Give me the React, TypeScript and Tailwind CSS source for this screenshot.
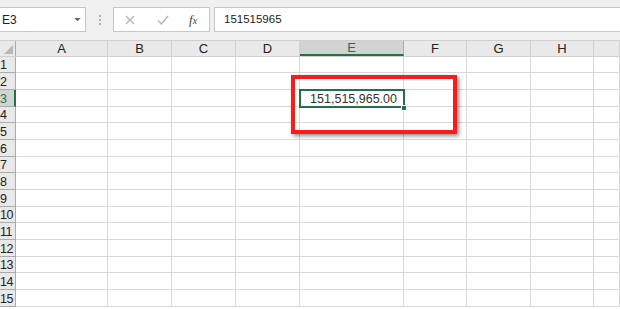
import React from "react";

const colWidths = [92, 64, 64, 64, 104, 63, 64, 63, 26];
const colNames = ["A", "B", "C", "D", "E", "F", "G", "H", ""];
const rowHeights = [16, 17, 17, 16, 17, 17, 16, 17, 17, 16, 17, 17, 16, 17, 17];

export default function App() {
  return (
    <div
      className="relative w-[620px] h-[309px] overflow-hidden bg-white"
      style={{ fontFamily: '"Liberation Sans", Arial, sans-serif' }}
    >
      {/* toolbar */}
      <div className="h-[40px] bg-[#f0f0f0] flex items-start pt-[7px]">
        <div className="w-[86px] h-[25px] bg-white border border-[#c6c6c6] border-l-0 flex items-center justify-between pl-[2px] pr-[4px]">
          <span className="text-[12px] text-[#222]">E3</span>
          <svg width="7" height="4" viewBox="0 0 8 5">
            <path d="M0 0 L8 0 L4 4 Z" fill="#666" />
          </svg>
        </div>
        <div className="w-[27px] h-[25px] flex flex-col items-center justify-center gap-[2px]">
          <div className="w-[2px] h-[2px] bg-[#b0b0b0]" />
          <div className="w-[2px] h-[2px] bg-[#b0b0b0]" />
          <div className="w-[2px] h-[2px] bg-[#b0b0b0]" />
        </div>
        <div className="w-[97px] h-[25px] bg-white border border-[#c6c6c6] flex items-center">
          <svg className="ml-[11px]" width="10" height="10" viewBox="0 0 10 10">
            <path d="M1 1 L9 9 M9 1 L1 9" stroke="#b4b4b4" strokeWidth="1.2" fill="none" />
          </svg>
          <svg className="ml-[22px]" width="12" height="10" viewBox="0 0 12 10">
            <path d="M1 5.5 L4.5 9 L11 1" stroke="#b4b4b4" strokeWidth="1.4" fill="none" />
          </svg>
          <span
            className="ml-[20px] text-[13px] italic text-[#444]"
            style={{ fontFamily: '"Liberation Serif", "Times New Roman", serif' }}
          >
            f<span className="text-[10px]">x</span>
          </span>
        </div>
        <div className="w-[4px]" />
        <div className="flex-1 h-[25px] bg-white border border-[#c6c6c6] border-r-0 flex items-center pl-[9px]">
          <span className="text-[11.5px] text-[#222]">151515965</span>
        </div>
      </div>

      {/* column header row */}
      <div className="flex h-[17px] bg-[#e9e9e9] border-t border-[#d0d0d0] border-b border-[#ababab]">
        <div className="w-[16px] h-full border-r border-[#ababab] relative bg-[#e9e9e9]">
          <svg className="absolute right-[2px] bottom-[2px]" width="9" height="9" viewBox="0 0 9 9">
            <path d="M9 0 L9 9 L0 9 Z" fill="#b9b9b9" />
          </svg>
        </div>
        {colWidths.map((w, i) => (
          <div
            key={i}
            style={{ width: w }}
            className={
              i === 4
                ? "h-full border-r border-[#ababab] bg-[#d3d3d3] flex items-center justify-center pt-[1px] text-[13px] text-[#217346] border-b-2 border-b-[#217346] -mb-[1px]"
                : "h-full border-r border-[#d0d0d0] flex items-center justify-center pt-[1px] text-[13px] text-[#222]"
            }
          >
            {colNames[i]}
          </div>
        ))}
      </div>

      {/* rows */}
      {rowHeights.map((h, r) => (
        <div key={r} className="flex" style={{ height: h }}>
          <div
            className={
              r === 2
                ? "w-[16px] h-full bg-[#d3d3d3] border-r-2 border-[#217346] border-b border-b-[#ababab] flex items-center pt-[2px] text-[12.5px] text-[#217346] leading-none tracking-[-0.5px]"
                : "w-[16px] h-full bg-[#e9e9e9] border-r border-[#ababab] border-b border-b-[#ababab] flex items-center pt-[2px] text-[12.5px] text-[#222] leading-none tracking-[-0.5px]"
            }
          >
            {r + 1}
          </div>
          {colWidths.map((w, i) => (
            <div
              key={i}
              style={{ width: w }}
              className="h-full border-r border-b border-[#d9d9d9] flex items-center justify-end pr-[6px] pt-[2px] text-[12.5px] text-[#333] leading-none"
            >
              {r === 2 && i === 4 ? "151,515,965.00" : ""}
            </div>
          ))}
        </div>
      ))}

      {/* selection border on E3 */}
      <div className="absolute left-[299px] top-[89px] w-[106px] h-[19px] border-2 border-[#217346] pointer-events-none" />
      <div className="absolute left-[401px] top-[105px] w-[6px] h-[6px] bg-[#217346] border border-white" />

      {/* red annotation box */}
      <div className="absolute left-[291px] top-[75px] w-[166px] h-[59px] border-[4px] border-[#ff1a1a] shadow-[2px_2px_4px_rgba(0,0,0,0.45)] pointer-events-none" />
    </div>
  );
}
